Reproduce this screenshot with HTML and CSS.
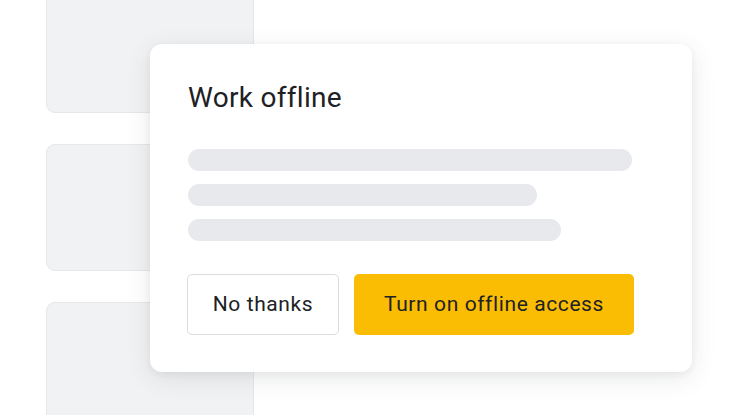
FILE: index.html
```html
<!DOCTYPE html>
<html>
<head>
<meta charset="utf-8">
<link rel="stylesheet" href="styles.css">
</head>
<body>
<div class="page">
  <div class="cards">
    <div class="card"></div>
    <div class="card"></div>
    <div class="card"></div>
  </div>
  <div class="dialog">
    <h1 class="title">Work offline</h1>
    <div class="lines">
      <div class="line l1"></div>
      <div class="line l2"></div>
      <div class="line l3"></div>
    </div>
    <div class="actions">
      <button class="btn secondary">No thanks</button>
      <button class="btn primary">Turn on offline access</button>
    </div>
  </div>
</div>
</body>
</html>
```

FILE: styles.css
```css
* { box-sizing: border-box; }
html, body { margin: 0; padding: 0; background: #fff; }
body { font-family: Roboto, "Open Sans", Arial, sans-serif; color: #202124; }
.page { position: relative; width: 739px; height: 415px; overflow: hidden; }
.cards {
  display: flex; flex-direction: column; gap: 31px;
  margin-left: 46px; margin-top: -14px; width: 208px;
}
.card {
  height: 127px; background: #f1f2f4; border: 1px solid #e6e7ea; border-radius: 9px;
}
.dialog {
  position: absolute; left: 150px; top: 44px; width: 542px; height: 328px;
  background: #fff; border-radius: 12px;
  box-shadow: 0 6px 24px rgba(60,64,67,0.12), 0 2px 6px rgba(60,64,67,0.06);
  padding: 38px 38px 0 38px;
  display: flex; flex-direction: column;
}
.title { margin: 0; font-weight: 400; font-size: 28px; line-height: 32px; color: #202124; letter-spacing: 0.3px; }
.lines { display: flex; flex-direction: column; gap: 13px; margin-top: 35px; }
.line { height: 22px; border-radius: 11px; background: #e8e9ec; }
.l1 { width: 444px; }
.l2 { width: 349px; }
.l3 { width: 373px; }
.actions { display: flex; gap: 15px; margin-top: 33px; margin-left: -1px; }
.btn {
  height: 61px; border-radius: 5px; font-family: Roboto, Arial, sans-serif;
  font-size: 21px; letter-spacing: 0.6px; color: #202124; padding: 0 0 2px 0; cursor: pointer;
}
.secondary { width: 152px; background: #fff; border: 1px solid #dadce0; }
.primary { width: 280px; background: #fbbc04; border: none; }
```
